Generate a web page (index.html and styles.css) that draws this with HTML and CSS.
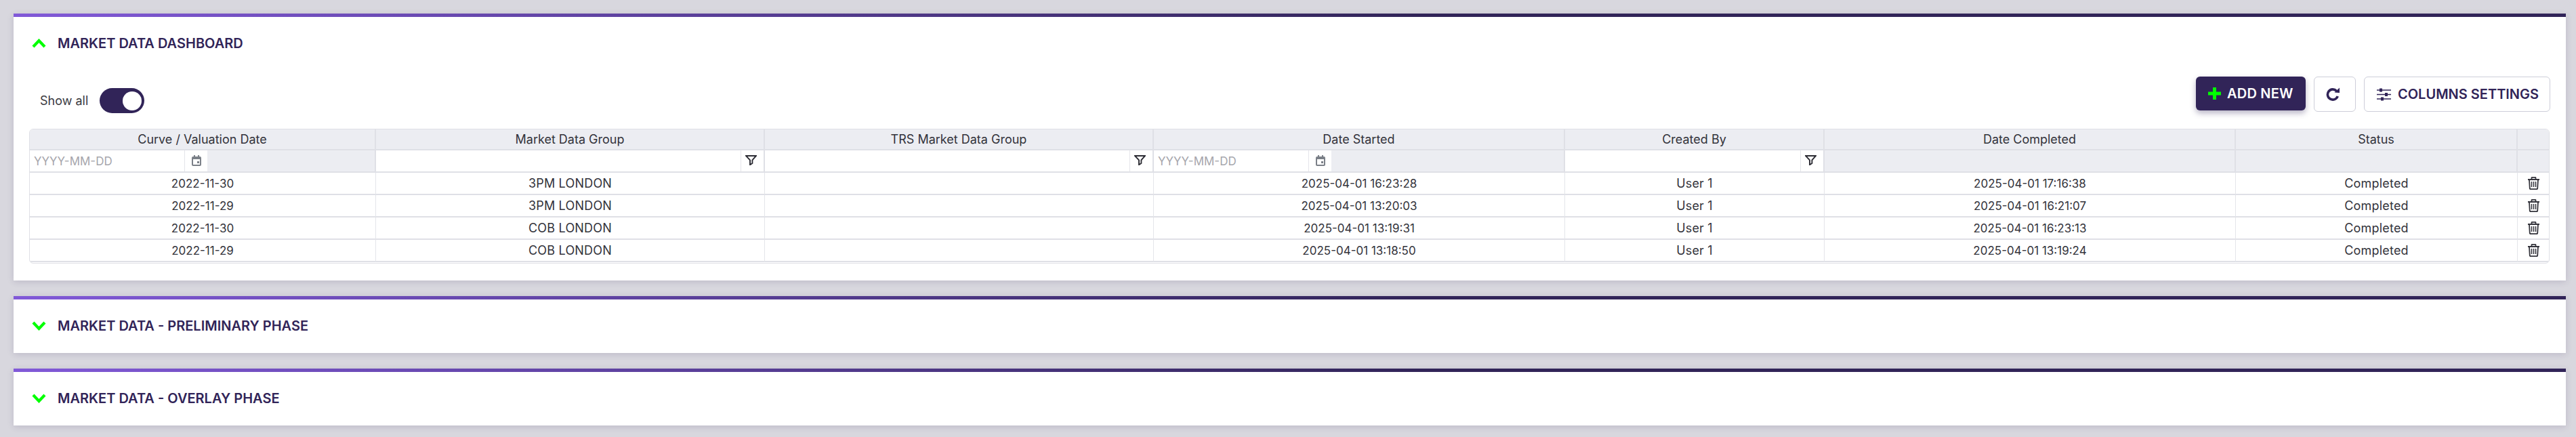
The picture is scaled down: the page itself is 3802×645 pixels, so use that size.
FILE: index.html
```html
<!DOCTYPE html>
<html lang="en">
<head>
<meta charset="utf-8">
<title>Market Data Dashboard</title>
<link rel="stylesheet" href="styles.css">
</head>
<body>
<svg class="sprites" width="0" height="0" aria-hidden="true">
  <symbol id="i-cal" viewBox="0 0 16 16"><path d="M1 4a2 2 0 0 1 2-2h1V0h2v2h4V0h2v2h1a2 2 0 0 1 2 2v10a2 2 0 0 1-2 2H3a2 2 0 0 1-2-2zM3 6v8h10V6zm6 3h3v3H9z" fill="#7b8088" fill-rule="evenodd"/></symbol>
  <symbol id="i-funnel" viewBox="0 0 17 15"><path d="M1 1h15l-5.600 6.400V12L7 14.200V7.400z" fill="none" stroke="#2b2b33" stroke-width="1.900"/></symbol>
  <symbol id="i-trash" viewBox="0 0 19 19"><path d="M1 4h17M3 4l.8 13.200q.1 1 1.100 1h9.200q1 0 1.100-1L16 4M6.500 4V1.600q0-.8.8-.8h4.400q.8 0 .8.8V4" fill="none" stroke="#33333b" stroke-width="1.800"/><path d="M6.500 7v8M9.500 7v8M12.500 7v8" stroke="#33333b" stroke-width="1.500"/></symbol>
  <symbol id="i-up" viewBox="0 0 21 14"><path d="M2 12l8.500-9 8.500 9" fill="none" stroke="#00ff00" stroke-width="4.200"/></symbol>
  <symbol id="i-down" viewBox="0 0 21 14"><path d="M2 2l8.500 9 8.500-9" fill="none" stroke="#00ff00" stroke-width="4.200"/></symbol>
</svg>

<section class="card">
  <div class="bar"></div>
  <header class="card-head">
    <svg class="chev"><use href="#i-up"/></svg>
    <h2 class="card-title">MARKET DATA DASHBOARD</h2>
  </header>
  <div class="card-body">
    <div class="toolbar">
      <label class="show-all">
        <span>Show all</span>
        <span class="toggle"><span class="knob"></span></span>
      </label>
      <div class="actions">
        <button class="btn btn-primary" type="button">
          <svg class="plus" viewBox="0 0 19 18"><path d="M7 0h5v6.500h7v5h-7V18H7v-6.500H0v-5h7z" fill="#00ff00"/></svg>
          ADD NEW
        </button>
        <button class="btn btn-icon" type="button" aria-label="Refresh">
          <svg class="refresh" viewBox="0 0 20 20"><path d="M15.500 5.200A7.600 7.600 0 1 0 17.200 13" fill="none" stroke="#312458" stroke-width="3.600"/><path d="M12.500 7.500L20 8V0.500z" fill="#312458"/></svg>
        </button>
        <button class="btn btn-outline" type="button">
          <svg class="sliders" viewBox="0 0 21 19"><path d="M0 3h21M0 9.500h21M0 16h21" stroke="#312458" stroke-width="1.700"/><path d="M4 .5h4v5H4zM12 7h4v5h-4zM6 13.500h4v5H6z" fill="#312458"/></svg>
          COLUMNS SETTINGS
        </button>
      </div>
    </div>

    <div class="table-wrap">
      <table class="grid">
        <colgroup>
          <col class="c1"><col class="c2"><col class="c3"><col class="c4"><col class="c5"><col class="c6"><col class="c7"><col class="c8">
        </colgroup>
        <thead>
          <tr class="head-row">
            <th>Curve / Valuation Date</th>
            <th>Market Data Group</th>
            <th>TRS Market Data Group</th>
            <th>Date Started</th>
            <th>Created By</th>
            <th>Date Completed</th>
            <th>Status</th>
            <th></th>
          </tr>
          <tr class="filter-row">
            <td><div class="f-date"><input class="f-input" placeholder="YYYY-MM-DD"><span class="f-btn"><svg class="cal"><use href="#i-cal"/></svg></span></div></td>
            <td class="f-white"><div class="f-text"><input class="f-input"><span class="f-btn"><svg class="funnel"><use href="#i-funnel"/></svg></span></div></td>
            <td class="f-white"><div class="f-text"><input class="f-input"><span class="f-btn"><svg class="funnel"><use href="#i-funnel"/></svg></span></div></td>
            <td><div class="f-date"><input class="f-input" placeholder="YYYY-MM-DD"><span class="f-btn"><svg class="cal"><use href="#i-cal"/></svg></span></div></td>
            <td class="f-white"><div class="f-text"><input class="f-input"><span class="f-btn"><svg class="funnel"><use href="#i-funnel"/></svg></span></div></td>
            <td></td>
            <td></td>
            <td></td>
          </tr>
        </thead>
        <tbody>
          <tr>
            <td class="num">2022-11-30</td><td>3PM LONDON</td><td></td><td class="num">2025-04-01 16:23:28</td><td>User 1</td><td class="num">2025-04-01 17:16:38</td><td>Completed</td>
            <td><svg class="trash"><use href="#i-trash"/></svg></td>
          </tr>
          <tr>
            <td class="num">2022-11-29</td><td>3PM LONDON</td><td></td><td class="num">2025-04-01 13:20:03</td><td>User 1</td><td class="num">2025-04-01 16:21:07</td><td>Completed</td>
            <td><svg class="trash"><use href="#i-trash"/></svg></td>
          </tr>
          <tr>
            <td class="num">2022-11-30</td><td>COB LONDON</td><td></td><td class="num">2025-04-01 13:19:31</td><td>User 1</td><td class="num">2025-04-01 16:23:13</td><td>Completed</td>
            <td><svg class="trash"><use href="#i-trash"/></svg></td>
          </tr>
          <tr>
            <td class="num">2022-11-29</td><td>COB LONDON</td><td></td><td class="num">2025-04-01 13:18:50</td><td>User 1</td><td class="num">2025-04-01 13:19:24</td><td>Completed</td>
            <td><svg class="trash"><use href="#i-trash"/></svg></td>
          </tr>
        </tbody>
      </table>
    </div>
  </div>
</section>

<section class="card">
  <div class="bar"></div>
  <header class="card-head">
    <svg class="chev"><use href="#i-down"/></svg>
    <h2 class="card-title">MARKET DATA - PRELIMINARY PHASE</h2>
  </header>
</section>

<section class="card">
  <div class="bar"></div>
  <header class="card-head">
    <svg class="chev"><use href="#i-down"/></svg>
    <h2 class="card-title">MARKET DATA - OVERLAY PHASE</h2>
  </header>
</section>
</body>
</html>
```

FILE: styles.css
```css
* { box-sizing: border-box; }
html, body { height: 100%; }
body {
  margin: 0;
  padding: 20px 15px 0 20px;
  background: #d8d7de;
  font-family: "Inter", "Liberation Sans", sans-serif;
  color: #33333b;
  display: flex;
  flex-direction: column;
  gap: 23px;
  overflow: hidden;
}
.sprites { position: absolute; }
.card {
  background: #fff;
  box-shadow: 0 2px 9px rgba(49, 36, 88, 0.16);
}
.bar {
  height: 5px;
  background: linear-gradient(90deg, #8159d8 0%, #312458 55%, #312458 100%);
}
.card-head {
  height: 79px;
  padding: 0 0 2px 27px;
  display: flex;
  align-items: center;
  gap: 17px;
}
.chev { width: 21px; height: 14px; display: block; }
.card-title {
  margin: 0;
  font-size: 20px;
  font-weight: 600;
  color: #312458;
}
.card-body { padding: 9px 23px 25px 23px; }
.toolbar {
  display: flex;
  justify-content: space-between;
  align-items: flex-start;
  height: 52px;
  margin-bottom: 25px;
}
.show-all {
  display: flex;
  align-items: center;
  gap: 17px;
  padding: 17px 0 0 16px;
  font-size: 18px;
  color: #3a3a42;
}
.toggle {
  width: 66px;
  height: 37px;
  border-radius: 19px;
  background: #312458;
  display: flex;
  justify-content: flex-end;
  align-items: center;
  padding-right: 4px;
}
.knob { width: 28px; height: 28px; border-radius: 50%; background: #fff; }
.actions { display: flex; align-items: flex-start; gap: 12px; }
.btn {
  font-family: inherit;
  font-weight: 600;
  font-size: 20px;
  height: 52px;
  border-radius: 6px;
  border: 1px solid #cdced9;
  background: #fff;
  color: #312458;
  display: flex;
  align-items: center;
  padding: 0;
}
.btn-primary {
  width: 162px;
  height: 50px;
  border: 0;
  background: #312458;
  color: #fff;
  padding-left: 18px;
  gap: 9px;
  letter-spacing: 0.2px;
  box-shadow: 0 4px 8px rgba(49, 36, 88, 0.35);
}
.btn-icon { width: 62px; padding-left: 17px; }
.btn-outline { width: 275px; padding-left: 18px; gap: 10px; }
.plus { width: 19px; height: 18px; }
.refresh { width: 20px; height: 20px; }
.sliders { width: 21px; height: 19px; }

.table-wrap {
  width: 3720px;
  border: 1px solid #dfe0e6;
  border-radius: 6px;
  padding-bottom: 1px;
  overflow: hidden;
}
.grid {
  width: 3718px;
  table-layout: fixed;
  border-collapse: separate;
  border-spacing: 0;
  font-size: 18px;
  letter-spacing: 0.2px;
  color: #33333b;
}
.c1 { width: 511px; }
.c2, .c3 { width: 574px; }
.c4, .c6 { width: 607px; }
.c5 { width: 383px; }
.c7 { width: 416px; }
.c8 { width: 46px; }
.grid th, .grid td {
  padding: 0;
  text-align: center;
  font-weight: 400;
  border-bottom: 2px solid #dfe0e6;
  border-right: 1px solid #e4e5ea;
}
.grid th:last-child, .grid td:last-child { border-right: 0; }
.head-row th {
  height: 31px;
  background: #ecedf2;
  border-right: 2px solid #dfe0e6;
  letter-spacing: 0;
}
.filter-row td {
  height: 33px;
  background: #ecedf2;
  border-right: 2px solid #dfe0e6;
}
.filter-row .f-white { background: #fff; }
tbody td { height: 33px; padding-bottom: 2px; }
.grid .num { font-size: 17px; letter-spacing: 0; }
.f-date, .f-text { display: flex; height: 31px; background: #fff; }
.f-date { width: 262px; }
.f-input {
  min-width: 0;
  flex: 1;
  border: 0;
  outline: 0;
  padding: 0 6px;
  background: transparent;
  font: 400 17px "Inter", "Liberation Sans", sans-serif;
}
.f-input::placeholder { color: #a6a6ac; opacity: 1; }
.f-btn {
  width: 34px;
  flex: none;
  border-left: 1px solid #e4e5ea;
  display: flex;
  align-items: center;
  justify-content: center;
}
.cal { width: 16px; height: 16px; display: block; margin-bottom: 1px; }
.funnel { width: 17px; height: 15px; display: block; margin: 0 5px 3px 0; }
.trash { width: 19px; height: 19px; display: block; margin: 0 auto; }
```
